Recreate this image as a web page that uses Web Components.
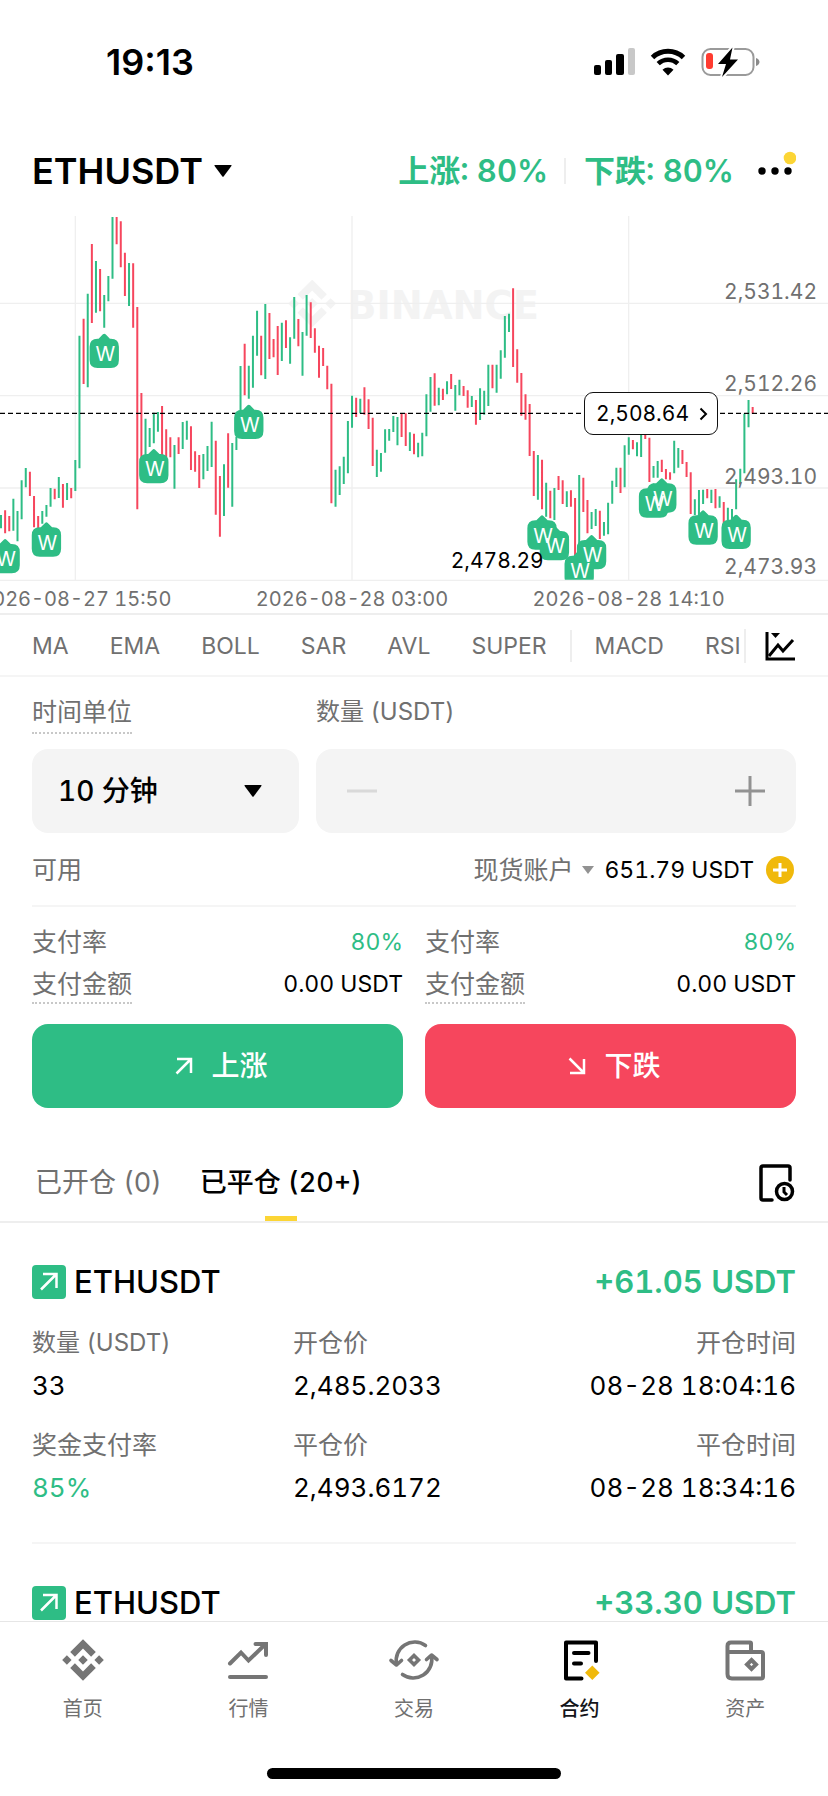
<!DOCTYPE html>
<html lang="zh-CN">
<head>
<meta charset="utf-8">
<meta name="viewport" content="width=device-width, initial-scale=1">
<title>ETHUSDT</title>
<style>
  :root {
    --up: #2ebd85;
    --down: #f6465d;
    --muted: #707070;
    --line: #eeeeee;
    --soft: #f5f5f5;
    --gold: #f0b90b;
    --yellow: #fcd535;
  }
  html, body { margin: 0; }
  body {
    background: #fff;
    color: #000;
    font-family: Inter, "Noto Sans CJK SC", sans-serif;
    font-size: 23px;
    font-variant-numeric: tabular-nums;
    line-height: 32px;
  }
</style>
</head>
<body>
<trade-app></trade-app>

<script>
const reset = `
  *, *::before, *::after { box-sizing: border-box; }
  button, input, select { font: inherit; font-variant-numeric: inherit; color: inherit; background: none; border: 0; padding: 0; margin: 0; outline: 0; border-radius: 0; }
  button { cursor: pointer; }
  a { color: inherit; text-decoration: none; }
  svg { display: block; flex: none; }
`;

function define(name, html, setup) {
  customElements.define(name, class extends HTMLElement {
    constructor() {
      super();
      const root = this.attachShadow({ mode: 'open' });
      const template = document.createElement('template');
      template.innerHTML = html.replace('<style>', '<style>' + reset);
      root.append(template.content.cloneNode(true));
    }
    connectedCallback() { if (setup) setup(this, this.shadowRoot); }
  });
}

/* Phone status bar */
define('status-bar', `
<style>
  :host { display: flex; justify-content: space-between; align-items: center; padding: 36px 67px 36px 106px; }
  time { font-size: 36px; line-height: 52px; font-weight: 600; font-variant-numeric: normal; }
</style>
<time>19:13</time>
<svg width="168" height="32" viewBox="0 0 168 32" role="img" aria-label="信号、无线网络、电池">
  <rect x="1" y="19" width="7" height="10" rx="2"/>
  <rect x="12" y="14" width="7" height="15" rx="2"/>
  <rect x="23" y="8" width="8" height="21" rx="2"/>
  <rect x="35" y="2" width="7" height="27" rx="2" fill="#c8c8c8"/>
  <g fill="none" stroke="#000" stroke-width="5">
    <path d="M59.5 11.5a22.500 22.500 0 0 1 31 0"/>
    <path d="M65.200 17.700a14 14 0 0 1 19.600 0" stroke-width="4.500"/>
  </g>
  <path d="M75 29.500l-5.500-5.700a8 8 0 0 1 11 0z"/>
  <rect x="109.500" y="3" width="51" height="26" rx="8" fill="#fff" stroke="#9a9a9a" stroke-width="2"/>
  <path d="M163 12c2.500 1 3.500 2.500 3.500 4s-1 3-3.500 4z" fill="#8a8a8a"/>
  <rect x="113" y="7" width="7" height="16" rx="3" fill="#ff3b30"/>
  <path d="M139.500 1.500l-14.500 16.500h8l-4 13 16-17.500h-8z" stroke="#fff" stroke-width="4" paint-order="stroke" stroke-linejoin="round"/>
</svg>`);

/* Symbol picker with payout rates */
define('pair-header', `
<style>
  :host { display: flex; justify-content: space-between; align-items: center; padding: 23px 32px 15px; line-height: 48px; font-weight: 600; }
  .pair { display: flex; align-items: center; gap: 10px; font-size: 36px; font-weight: 600; }
  .rates { display: flex; align-items: center; font-size: 31px; color: var(--up); }
  .rates i { width: 2px; height: 26px; margin: 0 18px 0 16px; background: var(--line); }
  .more { margin-left: 22px; }
</style>
<button class="pair">ETHUSDT
  <svg width="20" height="14" viewBox="0 0 20 14"><path d="M2 1h16q1 0 .4 1l-7.600 10.300q-.8 1-1.600 0L1.600 2Q1 1 2 1z"/></svg>
</button>
<div class="rates">
  <span>上涨: 80%</span><i></i><span>下跌: 80%</span>
  <button class="more" aria-label="更多">
    <svg width="40" height="40" viewBox="0 0 40 40"><circle cx="6" cy="20" r="3.700"/><circle cx="19" cy="20" r="3.700"/><circle cx="32" cy="20" r="3.700"/><circle cx="34" cy="7" r="6.300" fill="#fcd535"/></svg>
  </button>
</div>`);

/* Range bar chart. Each bar: direction, high, low in chart units. */
const BARS = `g915 955,r901 970,r918 964,g866 962,g903 994,g811 928,g774 832,r785 858,r858 952,r918 955,g903 941,g885 920,g834 890,r836 868,g801 864,r822 893,g819 870,r834 865,
g750 843,g377 775,r326 522,g251 532,r102 339,g153 308,r177 304,g255 353,g198 274,g21 206,r21 103,r34 172,r128 258,g159 288,r160 353,r291 898,r549 760,g626 760,g654 711,g608 700,g606 665,r588 745,r658 745,r682 742,g705 836,r682 732,g636 717,g632 689,r649 780,r724 785,r735 834,g732 808,g708 783,g635 771,r692 914,r798 980,g763 918,r670 833,g699 890,g680 720,g468 620,r401 556,g467 566,g377 533,g302 437,r377 496,g282 507,r309 447,r387 442,r348 495,
g338 453,r331 414,g382 461,g261 386,r327 409,g366 497,g255 377,r277 384,r355 428,r407 503,r414 468,r467 538,r521 880,g779 890,g769 855,g740 822,g633 790,g557 653,r563 621,g566 610,r532 614,r568 657,r623 768,g719 801,g729 785,g658 728,g657 692,g618 666,g621 706,r612 681,r610 708,g667 723,r671 733,g698 742,g668 739,g553 679,g501 605,r490 587,g533 586,r536 570,g514 553,r492 537,g525 602,g509 556,r528 558,r541 593,g558 591,r570 644,g535 630,g542 614,g464 588,r464 535,g464 548,g421 506,g318 443,g311 366,r235 471,r418 518,r489 617,r553 629,r582 738,r723 858,g735 869,r749 898,g818 920,r842 925,
g834 930,r798 840,r811 882,g844 891,r841 890,r864 1036,g795 1040,r803 906,r870 970,g906 957,g897 948,r902 987,g936 977,g878 973,g812 881,g773 831,r773 849,g706 832,g682 734,r690 718,g697 739,g665 741,r660 687,r683 816,g768 803,g753 803,r749 786,r777 808,r787 809,g692 790,g714 773,r720 762,r756 801,r787 912,g868 915,g840 915,g839 882,r837 865,g839 879,r837 895,g859 893,r876 945,g893 930,g897 930,g808 898,g776 822,g611 790,g570 652,r591 611`.split(',').map(s => s.trim());
const MARKERS = [[-17,987],[-7,937],[7,371],[19,717],[42,584],[113,916],[116,948],[122,1022],[125,975],[140,820],[142,805],[152,901],[160,914]];
const barX = k => 226 + k * 12.39;

define('price-chart', `
<style>
  :host { display: block; position: relative; border-bottom: 2px solid var(--line); }
  .plot { width: 100%; height: auto; font-family: inherit; }
  .tag { position: absolute; right: 110px; top: 182px; display: flex; align-items: center; gap: 10px; height: 43px; padding: 0 9px 0 11px; border: 1px solid #111; border-radius: 9px; background: #fff; font-size: 21px; }
</style>
<svg class="plot" viewBox="0 0 2484 1209" font-size="63">
  <g fill="#f3f3f3">
    <path transform="translate(865 209) scale(1.130)" d="m38.730 53.200 24.590-24.580 24.600 24.600 14.300-14.310L63.320 0 24.420 38.900zM0 63.310l14.300-14.300 14.300 14.300-14.300 14.300zM38.730 73.410l24.590 24.590 24.600-24.600 14.310 14.290-38.900 38.910-38.910-38.880zM98 63.310l14.300-14.300 14.310 14.300-14.300 14.320zM77.830 63.300 63.320 48.780 48.810 63.280l14.510 14.500z"/>
    <text x="1042" y="328" font-size="115" font-weight="700" font-family="DejaVu Sans">BINANCE</text>
  </g>
  <path fill="none" stroke="#efefef" stroke-width="4" d="M0 280H2484M0 557H2484M0 834H2484M0 1111H2484M226 18V1111M1056 18V1111M1886 18V1111"/>
  <path class="up" fill="none" stroke="#2ebd85" stroke-width="6"/>
  <path class="down" fill="none" stroke="#f6465d" stroke-width="6"/>
  <path d="M0 610H2484" stroke="#000" stroke-width="4" stroke-dasharray="15 9"/>
  <g fill="#707070" text-anchor="end">
    <text x="2451" y="268">2,531.42</text><text x="2451" y="544">2,512.26</text>
    <text x="2451" y="821">2,493.10</text><text x="2451" y="1093">2,473.93</text>
  </g>
  <g fill="#707070" text-anchor="middle" font-size="60">
    <text x="226" y="1187">2026-08-27 15:50</text><text x="1056" y="1187">2026-08-28 03:00</text><text x="1886" y="1187">2026-08-28 14:10</text>
  </g>
  <clipPath id="area"><rect width="2484" height="1109"/></clipPath>
  <g clip-path="url(#area)"><g class="pins" fill="#2ebd85"></g><g class="letters" fill="#fff" text-anchor="middle" font-size="60" font-weight="400"></g></g>
  <text x="1352" y="1073">2,478.29</text>
</svg>
<button class="tag">2,508.64
  <svg width="9" height="14" viewBox="0 0 9 14" fill="none" stroke="#000" stroke-width="2"><path d="M1.500 1.500 7 7l-5.500 5.500"/></svg>
</button>`, (host, root) => {
  const paths = { g: '', r: '' };
  BARS.forEach((bar, i) => {
    const [high, low] = bar.slice(1).split(' ');
    paths[bar[0]] += `M${barX(i - 18).toFixed(1)} ${high}V${low}`;
  });
  root.querySelector('.up').setAttribute('d', paths.g);
  root.querySelector('.down').setAttribute('d', paths.r);
  root.querySelector('.pins').innerHTML = MARKERS.map(([k, y]) =>
    `<path transform="translate(${barX(k)} ${y})" d="M-4 2q4-4 8 0l13 13h3q24 0 24 24v40q0 24-24 24h-40q-24 0-24-24v-40q0-24 24-24h3z"/>`).join('');
  root.querySelector('.letters').innerHTML = MARKERS.map(([k, y]) =>
    `<text x="${barX(k) + 3}" y="${y + 82}">W</text>`).join('');
});

/* Indicator shortcuts */
define('indicator-strip', `
<style>
  :host { display: flex; align-items: center; height: 62px; padding: 2px 32px 0 0; border-bottom: 2px solid var(--soft); color: var(--muted); }
  .list { flex: 1; min-width: 0; display: flex; align-items: center; gap: 41px; padding-left: 32px; overflow: hidden; height: 34px; border-right: 2px solid var(--line); }
  .list i { width: 2px; height: 32px; flex: none; margin: 0 -18px; background: var(--line); }
  .list button { flex: none; }
  .chart { margin-left: 18px; color: #000; }
</style>
<div class="list">
  <button>MA</button><button>EMA</button><button>BOLL</button><button>SAR</button><button>AVL</button><button>SUPER</button><i></i><button>MACD</button><button>RSI</button>
</div>
<button class="chart" aria-label="图表设置">
  <svg width="32" height="32" viewBox="0 0 32 32" fill="none" stroke="#000" stroke-width="3"><path d="M3 2v27h28"/><path d="M5 26l9-11 5 6 10-11"/><path d="M7 3h9l-4.500 5z" fill="#000" stroke="none"/></svg>
</button>`);

/* Label and value on one line */
define('info-row', `
<style>
  :host { display: flex; justify-content: space-between; align-items: flex-start; }
  .label { font-size: 25px; color: var(--muted); }
  :host([hint]) .label { padding-bottom: 2px; border-bottom: 2px dotted #c8c8c8; }
  :host([up]) .value { color: var(--up); }
</style>
<span class="label"><slot name="label"></slot></span><span class="value"><slot></slot></span>`);

/* Filled order button */
define('order-button', `
<style>
  :host { display: block; }
  button { display: flex; justify-content: center; align-items: center; gap: 18px; width: 100%; height: 84px; padding-left: 8px; border-radius: 16px; background: var(--up); color: #fff; font-size: 28px; font-weight: 500; }
  :host([side="down"]) button { background: var(--down); }
  :host([side="down"]) svg { transform: rotate(90deg); }
</style>
<button>
  <svg width="18" height="18" viewBox="0 0 18 18" fill="none" stroke="#fff" stroke-width="2.500"><path d="M1.500 16.500l14-14M2 2h14v14"/></svg>
  <slot></slot>
</button>`);

define('order-form', `
<style>
  :host { display: block; padding: 19px 32px 0; }
  .fields { display: grid; grid-template-columns: minmax(0, 267fr) minmax(0, 480fr); column-gap: 17px; row-gap: 15px; }
  label { justify-self: start; align-self: start; color: var(--muted); font-size: 24px; }
  label.hint { font-size: 25px; padding-bottom: 4px; border-bottom: 2px dotted #c8c8c8; }
  .box { display: flex; align-items: center; height: 84px; border-radius: 16px; background: #f4f4f4; }
  .unit { display: grid; padding: 0 36px 0 26px; }
  .unit > * { grid-area: 1 / 1; }
  .unit select { appearance: none; font-size: 28px; font-weight: 500; line-height: 40px; width: 100%; }
  .unit svg { justify-self: end; pointer-events: none; }
  .amount { padding: 0 30px; }
  .amount input { flex: 1; min-width: 0; font-size: 28px; text-align: center; }
  .wallet { display: flex; justify-content: space-between; align-items: center; padding: 20px 0 18px; line-height: 34px; border-bottom: 2px solid var(--soft); }
  .cn { font-size: 25px; color: var(--muted); }
  .right { display: flex; align-items: center; }
  .account { display: flex; align-items: center; gap: 8px; margin-right: 9px; }
  .add { margin-left: 10px; }
  .sides { display: grid; grid-template-columns: 1fr 1fr; gap: 10px 22px; padding-top: 19px; }
  .sides order-button { margin-top: 10px; }
</style>
<div class="fields">
  <label class="hint" for="unit">时间单位</label>
  <label for="amount">数量 (USDT)</label>
  <div class="box unit">
    <select id="unit"><option>10 分钟</option><option>30 分钟</option></select>
    <svg width="20" height="14" viewBox="0 0 20 14"><path d="M2 1h16q1 0 .4 1l-7.600 10.300q-.8 1-1.600 0L1.600 2Q1 1 2 1z"/></svg>
  </div>
  <div class="box amount">
    <button aria-label="减少"><svg width="32" height="32" viewBox="0 0 32 32" stroke="#d9d9d9" stroke-width="3"><path d="M1 16h30"/></svg></button>
    <input id="amount" inputmode="decimal">
    <button aria-label="增加"><svg width="32" height="32" viewBox="0 0 32 32" stroke="#929292" stroke-width="3"><path d="M1 16h30M16 1v30"/></svg></button>
  </div>
</div>
<div class="wallet">
  <span class="cn">可用</span>
  <div class="right">
    <button class="account cn">现货账户<svg width="14" height="10" viewBox="0 0 14 10"><path d="M1 1h12L7 9z" fill="#929292"/></svg></button>
    <span>651.79 USDT</span>
    <button class="add" aria-label="充值"><svg width="32" height="32" viewBox="0 0 32 32"><circle cx="16" cy="16" r="14" fill="#f0b90b"/><path d="M9 16h14M16 9v14" stroke="#fff" stroke-width="3"/></svg></button>
  </div>
</div>
<div class="sides">
  <info-row up><span slot="label">支付率</span>80%</info-row>
  <info-row up><span slot="label">支付率</span>80%</info-row>
  <info-row hint><span slot="label">支付金额</span>0.00 USDT</info-row>
  <info-row hint><span slot="label">支付金额</span>0.00 USDT</info-row>
  <order-button>上涨</order-button>
  <order-button side="down">下跌</order-button>
</div>`);

define('position-tabs', `
<style>
  :host { display: flex; justify-content: space-between; align-items: flex-start; padding: 55px 33px 0 35px; border-bottom: 2px solid var(--line); }
  [role="tablist"] { display: flex; gap: 38px; }
  [role="tab"] { font-size: 27px; line-height: 40px; color: var(--muted); }
  [role="tab"]::after { content: ""; display: block; width: 32px; height: 5px; margin: 13px auto 0; }
  [role="tab"][aria-selected="true"] { color: #000; font-weight: 500; }
  [aria-selected="true"]::after { background: var(--yellow); }
</style>
<div role="tablist">
  <button role="tab" aria-selected="false">已开仓 (0)</button>
  <button role="tab" aria-selected="true">已平仓 (20+)</button>
</div>
<button aria-label="历史记录">
  <svg width="36" height="40" viewBox="0 0 36 40" fill="none" stroke="#000" stroke-width="3.500"><path d="M31 17V5q0-2-2-2H4Q2 3 2 5v30q0 2 2 2h9" stroke-linecap="round"/><circle cx="25.500" cy="28.500" r="8"/><path d="M25 24v5l3 3" stroke-width="3"/></svg>
</button>`);

/* One closed position */
define('position-card', `
<style>
  :host { display: block; margin: 0 32px; padding: 42px 0 37px; border-bottom: 2px solid var(--soft); }
  :host([brief]) { border: 0; padding-bottom: 0; }
  header { display: flex; align-items: center; gap: 8px; font-size: 31px; line-height: 34px; font-weight: 500; }
  .profit { margin-left: auto; color: var(--up); font-weight: 600; }
</style>
<header>
  <svg width="34" height="34" viewBox="0 0 34 34"><rect width="34" height="34" rx="4" fill="#2ebd85"/><path d="M9 24.500 24 9.500M11 9h13.500v14" fill="none" stroke="#fff" stroke-width="2.500"/></svg>
  <span><slot name="pair"></slot></span><span class="profit"><slot name="profit"></slot></span>
</header>
<slot></slot>`);

define('position-facts', `
<style>
  :host { display: grid; grid-template-columns: 261fr 251fr 252fr; row-gap: 26px; padding-top: 28px; }
</style>
<slot></slot>`);

define('fact-item', `
<style>
  :host { display: grid; row-gap: 10px; }
  .label { color: var(--muted); font-size: 25px; }
  :host([mixed]) .label { font-size: 24px; }
  .value { font-size: 26px; line-height: 34px; white-space: nowrap; }
  :host([end]) { justify-items: end; }
  :host([up]) .value { color: var(--up); }
</style>
<span class="label"><slot name="label"></slot></span><span class="value"><slot></slot></span>`);

define('nav-item', `
<style>
  :host { display: block; color: var(--muted); }
  :host([active]) { color: #14151a; }
  a { display: grid; justify-items: center; row-gap: 13px; font-size: 20px; line-height: 24px; }
  :host([active]) a { font-weight: 500; }
  span { display: block; }
  ::slotted(svg) { display: block; }
</style>
<a href="#"><slot name="icon"></slot><span><slot></slot></span></a>`);

define('bottom-nav', `
<style>
  :host { display: block; border-top: 1px solid #e6e6e6; background: #fff; padding: 14px 0 17px; }
  nav { display: grid; grid-template-columns: repeat(5, 1fr); }
  .home { width: 294px; height: 11px; margin: 47px auto 0; border-radius: 6px; background: #000; }
</style>
<nav>
  <nav-item><svg slot="icon" width="48" height="48" viewBox="0 0 146 146" fill="#757575"><path transform="translate(9.700 9.700)" d="m38.730 53.200 24.590-24.580 24.600 24.600 14.300-14.310L63.320 0 24.420 38.900zM0 63.310l14.300-14.300 14.300 14.300-14.300 14.300zM38.730 73.410l24.590 24.590 24.600-24.600 14.310 14.290-38.900 38.910-38.910-38.880zM98 63.310l14.300-14.300 14.310 14.300-14.300 14.320zM77.830 63.300 63.320 48.780 48.810 63.280l14.510 14.500z"/></svg>首页</nav-item>
  <nav-item><svg slot="icon" width="48" height="48" viewBox="0 0 48 48" fill="none" stroke="#757575" stroke-width="4"><path d="M6 27.500 17 16.500l7.500 8L41 8.500" stroke-linecap="round"/><path d="M31.500 8H42v11" stroke-linecap="round"/><path d="M6 41h36" stroke-linecap="round"/></svg>行情</nav-item>
  <nav-item><svg slot="icon" width="52" height="48" viewBox="-26 -24 52 48" fill="none" stroke="#757575" stroke-width="3.600" stroke-linecap="round" stroke-linejoin="round"><path d="M11.500-14.500A18.500 18.500 0 0 0-17.500 4"/><path d="M-23 .5l5.500 4.500 5-4.500"/><g transform="rotate(180)"><path d="M11.500-14.500A18.500 18.500 0 0 0-17.500 4"/><path d="M-23 .5l5.500 4.500 5-4.500"/></g><path d="M0-4.500 4.500 0 0 4.500-4.500 0z" stroke-linejoin="miter"/></svg>交易</nav-item>
  <nav-item active><svg slot="icon" width="48" height="48" viewBox="0 0 48 48" fill="none" stroke="#000" stroke-width="4" stroke-linecap="round" stroke-linejoin="round"><path d="M40 25V6.500H10v36h15.500M18 17h14.500M18 27.500h7"/><path d="M36.300 29.500l7.300 7.300-7.300 7.300-7.300-7.300z" fill="#f0b90b" stroke="none"/></svg>合约</nav-item>
  <nav-item><svg slot="icon" width="48" height="48" viewBox="0 0 48 48" fill="none" stroke="#757575" stroke-width="4"><path d="M30 16V7.500q0-1-1-1H10Q6.500 6.500 6.500 10v28q0 4.500 4.500 4.500h29q2 0 2-2V18q0-2-2-2H7" stroke-linejoin="round"/><path d="M30.500 24l4.500 4.500-4.500 4.500-4.500-4.500z"/></svg>资产</nav-item>
</nav>
<div class="home"></div>`);

define('trade-app', `
<style>
  :host { display: flex; flex-direction: column; height: 100vh; overflow: hidden; }
  main { flex: 1; min-height: 0; overflow-y: auto; scrollbar-width: none; }
</style>
<status-bar></status-bar>
<main>
  <pair-header></pair-header>
  <price-chart></price-chart>
  <indicator-strip></indicator-strip>
  <order-form></order-form>
  <position-tabs></position-tabs>
  <position-card>
    <span slot="pair">ETHUSDT</span><span slot="profit">+61.05 USDT</span>
    <position-facts>
      <fact-item mixed><span slot="label">数量 (USDT)</span>33</fact-item>
      <fact-item><span slot="label">开仓价</span>2,485.2033</fact-item>
      <fact-item end><span slot="label">开仓时间</span>08-28 18:04:16</fact-item>
      <fact-item up><span slot="label">奖金支付率</span>85%</fact-item>
      <fact-item><span slot="label">平仓价</span>2,493.6172</fact-item>
      <fact-item end><span slot="label">平仓时间</span>08-28 18:34:16</fact-item>
    </position-facts>
  </position-card>
  <position-card brief>
    <span slot="pair">ETHUSDT</span><span slot="profit">+33.30 USDT</span>
  </position-card>
</main>
<bottom-nav></bottom-nav>`);
</script>
</body>
</html>
